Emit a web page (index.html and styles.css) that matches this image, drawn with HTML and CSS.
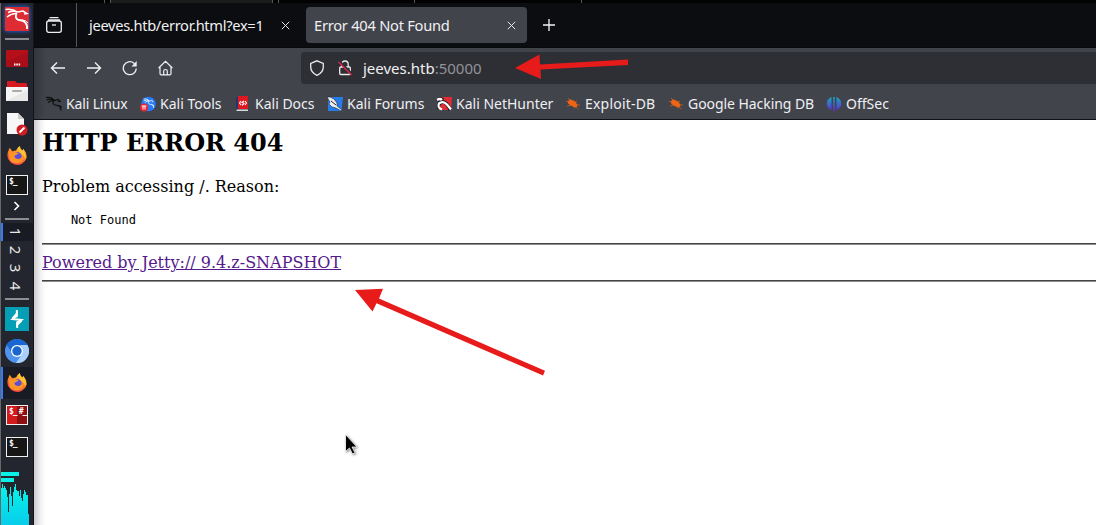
FILE: index.html
```html
<!DOCTYPE html>
<html lang="en">
<head>
<meta charset="utf-8">
<title>Error 404 Not Found</title>
<link rel="stylesheet" href="styles.css">
</head>
<body>
<svg class="defs" width="0" height="0" aria-hidden="true">
  <defs>
    <linearGradient id="fx" x1=".8" y1="0" x2=".3" y2="1"><stop offset="0" stop-color="#ffe14a"/><stop offset=".45" stop-color="#ff8b24"/><stop offset="1" stop-color="#f5334d"/></linearGradient>
    <linearGradient id="off" x1="0" y1="0" x2="0" y2="1"><stop offset="0" stop-color="#15aac0"/><stop offset="1" stop-color="#6323dc"/></linearGradient>
    <linearGradient id="wave" x1="0" y1="0" x2="0" y2="1"><stop offset="0" stop-color="#05f5e9"/><stop offset="1" stop-color="#08cdea"/></linearGradient>
    <symbol id="firefox" viewBox="0 0 24 24">
      <path fill="url(#fx)" d="M4 3l3 4q2-1 4-1 1-3 4-5 0 3 3 5l1-2q4 5 3.5 10A10.5 10.5 0 1 1 2 8z"/>
      <circle cx="12" cy="12.5" r="5" fill="#5b50d8"/>
      <path fill="#ff9526" d="M3 8q4-2 8 0l3 1-3 2-2 1q1 4 6 3 3-1 4-4 1 7-5 9-7 1-10-4z"/>
      <path fill="#ffc52d" d="M15 1q0 3 3 5 5 5 3 10-1-5-5-7-3-3-1-8z"/>
    </symbol>
    <symbol id="dragon" viewBox="0 0 16 16">
      <path fill="none" stroke="currentColor" stroke-width="1.3" d="M0 1.5q4-.7 7 1.2M.5 4q4-1.8 8 0M2 6.5q3-2.5 7-2l3-1 2 1.7-2 .5M8 4q-2 3 0 4.5 1.5 1 4 1 3 1 2.8 5M11 9.5q3 0 4.5 2"/>
    </symbol>
    <symbol id="bug" viewBox="0 0 16 16">
      <path fill="#ee6414" d="M3 5.200l2-2 2.500 1 3 1.600 2 3.200-1.200 2.500-3-.8-3.500-1.600-2-2z"/>
      <path fill="none" stroke="#ee6414" stroke-width=".6" d="M1 5.500h3M3 2l2 2M2 10l4-1M8.500 10l1.500 2.500M10 6l2-1M12 9h3M11 11l2.500 2"/>
    </symbol>
    <symbol id="close" viewBox="0 0 9 9"><path fill="none" stroke="#e9e9ec" stroke-width="1" d="M.8.8l7.4 7.4M8.2.8L.8 8.2"/></symbol>
  </defs>
</svg>

<div class="desktop-strip"><i class="s1"></i><i class="s2"></i><i class="s3"></i><i class="s4"></i></div>

<div class="screen">
  <nav class="dock">
    <div class="cell menu">
      <svg width="30" height="32" viewBox="0 0 30 32"><path class="menu-glow" fill="#dd2c32" d="M3 4h24v24H3z"/><g fill="none" stroke="#fff" stroke-width="1.5"><path d="M3.500 6.500q7-1 12 2.500M6 9.500q5-2 10-.5l5-1 4 2.500-3 .5M5 14q5-4 10-3.500"/><path stroke-width="1.800" d="M14.500 10.500q-2 5 2 6.500 5 0 7 3 2 2 1.500 6"/><path stroke-width="1" d="M20 17q4 0 6 3"/></g></svg>
    </div>
    <div class="rule"></div>
    <div class="cell c-show"><svg width="22" height="18"><rect width="22" height="17" fill="#b50f1a"/><path fill="#970d16" d="M0 17V12L22 2v15z" opacity=".4"/><path stroke="#fff" stroke-width="2" stroke-dasharray="1.500 .8" d="M8 14.500h6.500"/></svg></div>
    <div class="cell c-folder"><svg width="22" height="21"><path fill="#d71920" d="M1 7V1q0-1 1-1h7l2 2h9q1 0 1 1v4z"/><path fill="#f5f5f5" d="M0 6h22v14H0z"/><path fill="#dcdcdc" d="M0 20L22 9v11z" opacity=".5"/><path stroke="#aaa" stroke-width="2" stroke-linecap="round" d="M7 10h8"/></svg></div>
    <div class="cell c-doc"><svg width="22" height="24" viewBox="0 0 22 24"><path fill="#f7f7f7" d="M1 1h11l6 6v15H1z"/><path fill="#ccc" d="M12 1l6 6h-6z"/><circle cx="16" cy="18" r="5.500" fill="#d31c22"/><path stroke="#fff" stroke-width="2" d="M13.500 20.500l5-5"/></svg></div>
    <div class="cell c-fox"><svg width="22" height="22"><use href="#firefox"/></svg></div>
    <div class="cell c-term"><div class="terminal">$_</div></div>
    <div class="cell c-chev"><svg width="8" height="10"><path fill="none" stroke="#fff" stroke-width="1.600" d="M1.500 1l4 4-4 4"/></svg></div>
    <div class="rule"></div>
    <div class="spaces">
      <div class="space current"><span>1</span></div>
      <div class="space"><span>2</span></div>
      <div class="space"><span>3</span></div>
      <div class="space"><span>4</span></div>
    </div>
    <div class="rule"></div>
    <div class="cell c-burp"><svg width="24" height="24"><path fill="#049fb5" d="M0 0h24v24H0z"/><path fill="none" stroke="#fff" stroke-width="1.900" d="M11.800 3v5.500L7.500 12l9 1-4.300 3v5"/><path fill="#fff" d="M12.700 4v6L7 12.500v-2zM11.300 20v-5.500l5.700-2v2z"/></svg></div>
    <div class="cell c-chrome"><svg width="24" height="24"><circle cx="12" cy="12" r="12" fill="#4f93ed"/><path fill="#1a66d3" d="M1.600 6A12 12 0 0 1 22.400 6H12a6 6 0 0 0-6 6z"/><path fill="#a9cffa" d="M22.400 6A12 12 0 0 1 11 24l6-9q2-5-2-9z"/><circle cx="12" cy="12" r="6" fill="#fff"/><circle cx="12" cy="12" r="4.700" fill="#1a66cf"/></svg></div>
    <div class="cell c-active"><svg width="22" height="22"><use href="#firefox"/></svg></div>
    <div class="cell c-root"><div class="terminal split">$_<b>#_</b></div></div>
    <div class="cell c-term2"><div class="terminal">$_</div></div>
    <svg class="monitor" width="32" height="53"><path fill="#08f0e7" d="M0 0h18v4H0zM0 6h13v4H0z"/><path fill="url(#wave)" d="M0 53V16h1v-4h1v4h1v-2h1v2h1v2h1v7h1v15h1V22h1v-7h1v9h1v10h1V20h1v-5h1v-3h1v6h1v1h2v5h1v-6h1v8h1v3h1v-7h1v-4h1v2h1v3h2v19h1v11z"/></svg>
  </nav>

  <main class="browser">
    <header class="tabs">
      <div class="view"><svg width="16" height="16" viewBox="0 0 16 16"><g fill="none" stroke="#f0f0f2" stroke-width="1.300"><path d="M3.500.7h9M2 3h12"/><rect x=".7" y="4" width="14.600" height="11.300" rx="2"/><path d="M6 8h4"/></g></svg></div>
      <div class="tab first"><span>jeeves.htb/error.html?ex=1</span><svg width="9" height="9"><use href="#close"/></svg></div>
      <div class="tab selected"><span>Error 404 Not Found</span><svg width="9" height="9"><use href="#close"/></svg></div>
      <svg class="plus" width="12" height="12"><path stroke="#f4f4f6" stroke-width="1.300" d="M6 0v12M0 6h12"/></svg>
    </header>
    <div class="toolbar">
      <div class="buttons">
        <svg width="16" height="16"><path fill="none" stroke="#f0f0f2" stroke-width="1.400" d="M15 8H1.500M7 2.500L1.500 8 7 13.500"/></svg>
        <svg width="16" height="16"><path fill="none" stroke="#f0f0f2" stroke-width="1.400" d="M1 8h13.500M9 2.500L14.500 8 9 13.500"/></svg>
        <svg width="16" height="16"><path fill="none" stroke="#f0f0f2" stroke-width="1.300" d="M14.300 8.500A6.500 6.500 0 1 1 12 3.200l1 1"/><path fill="#f0f0f2" d="M14.700 1v5.500H9.500z"/></svg>
        <svg width="16" height="16"><path fill="none" stroke="#f0f0f2" stroke-width="1.200" d="M.6 8l6.900-6.700L14.400 8M2 7v6.500q0 1.300 1.300 1.300h8.400q1.300 0 1.300-1.300V7M5.700 15V11q0-1.500 1.800-1.500t1.800 1.500v4"/></svg>
      </div>
      <div class="address">
        <svg width="16" height="16"><path fill="none" stroke="#ececef" stroke-width="1.300" d="M8 .8l6.300 2.700V7q0 5.500-6.300 8.300Q1.700 12.500 1.700 7V3.500z"/></svg>
        <svg width="16" height="16"><path fill="none" stroke="#ececef" stroke-width="1.300" d="M4.800 7V4.500q0-3.500 3.200-3.500t3.200 3.500V7M3.700 7h8.600q1 0 1 1v5.500q0 1-1 1H3.700q-1 0-1-1V8q0-1 1-1z"/><path stroke="#2e2f34" stroke-width="2.400" d="M3 2l11 11"/><path stroke="#e0244f" stroke-width="1.400" d="M1.500 2l13 13"/></svg>
        <span class="url">jeeves.htb<em>:50000</em></span>
      </div>
    </div>
    <nav class="bookmarks">
      <a class="b1"><svg class="ink" width="16" height="16"><use href="#dragon"/></svg><span>Kali Linux</span></a>
      <a class="b2"><svg class="pale" width="16" height="16"><circle cx="8.500" cy="8" r="7.300" fill="#267af5"/><use href="#dragon" x="3" y="2" width="12" height="11"/><circle cx="4" cy="11.500" r="4" fill="#ec2530"/><path stroke="#fff" fill="none" d="M1.800 10h4.500M3 10v3.500M5 10v3.500"/></svg><span>Kali Tools</span></a>
      <a class="b3"><svg width="16" height="16"><path fill="#23356c" d="M1 1h2v13H1z"/><path fill="#de1820" d="M3 0h10v13H3z"/><path fill="#dadada" d="M1.500 13.500H13v1.500H1.500z"/><path fill="none" stroke="#fff" stroke-width="1.100" d="M6 5L4.500 7 6 9M10 5l1.500 2L10 9M9 5L7 6.500l2 1L7 9.500"/></svg><span>Kali Docs</span></a>
      <a class="b4"><svg width="16" height="16"><path fill="#267bea" d="M1 1h15l-1.500 14H1z"/><path fill="#eee" stroke="#17233b" stroke-width=".6" d="M0 1l3 0 4 2 3 4v3l5 4-1 1-5-3-4-1-3-3 1-2z"/><path stroke="#222" d="M4 5l5 4"/></svg><span>Kali Forums</span></a>
      <a class="b5"><svg width="16" height="16"><path fill="#e32b36" d="M4 1h12l-1 13H3z"/><path fill="none" stroke="#1b2026" stroke-width="3.600" d="M1 5q3-4 6-1M3 13q-2-6 4-7 4 0 7 8"/><path fill="none" stroke="#fff" stroke-width="2.200" d="M1 4q3-2 5 0M6 13.500q-5-2-3-6 4-3 8 1l4 5"/></svg><span>Kali NetHunter</span></a>
      <a class="b6"><svg width="16" height="16"><use href="#bug"/></svg><span>Exploit-DB</span></a>
      <a class="b7"><svg width="16" height="16"><use href="#bug"/></svg><span>Google Hacking DB</span></a>
      <a class="b8"><svg width="16" height="16"><path fill="url(#off)" d="M5.500 1v13Q.8 12 .8 7.500T5.500 1zM10.500 1v13q4.700-2 4.700-6.500T10.500 1zM7.200 1h1.600v14.500L8 15l-.8.500z"/></svg><span>OffSec</span></a>
    </nav>
    <article class="page">
      <h2>HTTP ERROR 404</h2>
      <p>Problem accessing /. Reason:</p>
      <pre>    Not Found</pre>
      <hr>
      <a class="jetty" href="#">Powered by Jetty:// 9.4.z-SNAPSHOT</a>
      <hr>
    </article>
  </main>
</div>

<svg class="overlay" width="1096" height="525">
  <g fill="#e81b1b" stroke="none">
    <path d="M515 68L539.500 54.500 540 64.500 628 59.500v5.500L540.500 69.500l.5 9.500z"/>
    <path d="M355 290L383 288.800l-4 9.700L545 370.800l-2 4.700L376.500 303.300l-4 8.200z"/>
  </g>
  <path class="pointer" fill="#000" stroke="#fff" stroke-width=".8" d="M345.500 434.500v17l4-3.500 3 6 2.500-1.200-3-5.800h5z"/>
</svg>
</body>
</html>
```
FILE: styles.css
```css
* { box-sizing: border-box; }
body { margin: 0; width: 1096px; height: 525px; overflow: hidden; background: #000; font-family: "Noto Sans", sans-serif; }
svg { display: block; flex: none; }
.defs { position: absolute; }

.desktop-strip { height: 3px; display: flex; background: #020202; }
.desktop-strip i { height: 3px; border-left: 1px solid #555; }
.s1 { margin-left: 104px; width: 6px; }
.s2 { width: 163px; background: #1c1c1c; border-right: 1px solid #555; }
.s3 { margin-left: 5px; width: 131px; }
.s4 { margin-left: 5px; width: 168px; border-right: 1px solid #555; }
.screen { display: flex; height: 522px; }

.dock { width: 34px; border-left: 1px solid #686868; border-right: 1px solid #14151c; background: #23262f; display: flex; flex-direction: column; align-items: center; }
.cell { width: 100%; display: flex; align-items: center; justify-content: center; }
.menu { height: 32px; margin-bottom: 3px; }
.menu-glow { filter: drop-shadow(0 0 2px #1f6dff); }
.rule { width: 24px; height: 2px; background: #8d8e92; flex: none; }
.c-show { height: 37px; }
.c-folder { height: 28px; }
.c-doc { height: 37px; }
.c-fox { height: 28px; }
.c-term { height: 29px; }
.c-chev { height: 19px; padding-bottom: 5px; }
.terminal { width: 22px; height: 20px; border: 1px solid #f1f1f1; background: #161616; color: #fff; font: bold 8px/10px "DejaVu Sans Mono", monospace; padding: 1px 0 0 2px; display: flex; letter-spacing: -1px; }
.split { background: linear-gradient(90deg, #d31a1d 50%, #8f1013 50%); }
.split b { margin-left: 2px; }
.spaces { width: 100%; padding: 3px 0; }
.space { height: 18px; display: flex; align-items: center; justify-content: center; color: #e8e8e8; font-size: 15px; line-height: 18px; }
.space span { transform: rotate(90deg); margin-right: 1px; }
.current { background: #191b24; border-left: 2px solid #2e7bff; padding-right: 2px; }
.c-burp { height: 38px; }
.c-chrome { height: 29px; padding-bottom: 3px; }
.c-active { height: 32px; background: #191b24; border-left: 2px solid #2e7bff; padding-right: 2px; }
.c-root { height: 32px; }
.c-term2 { height: 32px; }
.monitor { margin-top: 9px; align-self: flex-start; }

.browser { flex: 1; min-width: 0; display: flex; flex-direction: column; }
.tabs { height: 45px; background: #0c0d11; border-bottom: 1px solid #08090d; display: flex; align-items: center; color: #f0f0f3; font-size: 14.670px; flex: none; }
.view { width: 43px; height: 44px; padding-left: 12px; border-right: 1px solid #55565c; display: flex; align-items: center; }
.tab { height: 36px; display: flex; align-items: center; justify-content: space-between; white-space: nowrap; }
.first { width: 213px; padding-left: 12px; letter-spacing: -.32px; }
.selected { width: 221px; margin-left: 16px; padding: 0 11px 0 8px; border-radius: 4px; background: #42444c; letter-spacing: -.25px; }
.plus { margin-left: 16px; }
.toolbar { height: 40px; background: linear-gradient(90deg, #34363d 0, #42444c 12px); display: flex; align-items: center; flex: none; }
.buttons { width: 267px; padding-left: 16px; display: flex; gap: 20px; }
.address { flex: 1; height: 32px; background: #2e2f34; border-radius: 4px 0 0 4px; display: flex; align-items: center; padding-left: 8px; gap: 12px; color: #f0f0f2; font-size: 15px; }
.url { margin-left: -2px; }
.url em { color: #929298; font-style: normal; }
.bookmarks { height: 32px; background: linear-gradient(90deg, #34363d 0, #42444c 12px); border-bottom: 1px solid #101117; display: flex; align-items: center; color: #efeff2; font-size: 14px; white-space: nowrap; padding-left: 12px; flex: none; }
.bookmarks a { display: flex; align-items: center; gap: 4px; flex: none; }
.b1 { width: 94px; letter-spacing: -.15px; }
.b2 { width: 95px; }
.b3 { width: 92px; }
.b4 { width: 109px; }
.b5 { width: 129px; }
.b6 { width: 103px; letter-spacing: .2px; }
.b7 { width: 158px; letter-spacing: -.06px; }
.ink { color: #111; }
.pale { color: #e0efff; }

.page { flex: 1; background: linear-gradient(90deg, #ccc 0, #ddd 3px, #f3f3f3 7px, #fff 12px); padding: 9px 0 0 8px; color: #000; font: 16px "DejaVu Serif", serif; }
.page h2 { margin: 0; font-size: 24px; line-height: 28px; }
.page p { margin: 20px 0 16px; line-height: 19px; }
.page pre { margin: 0 0 15px; font: 12px/16px "DejaVu Sans Mono", monospace; }
.page hr { height: 2px; border: 0; border-top: 1px solid #444; border-bottom: 1px solid #8b8b8b; margin: 0; }
.jetty { display: block; width: max-content; height: 35px; line-height: 35px; color: #551a8b; }

.overlay { position: absolute; top: 0; left: 0; pointer-events: none; }
.pointer { filter: drop-shadow(1px 1px 1px #888); }
```
